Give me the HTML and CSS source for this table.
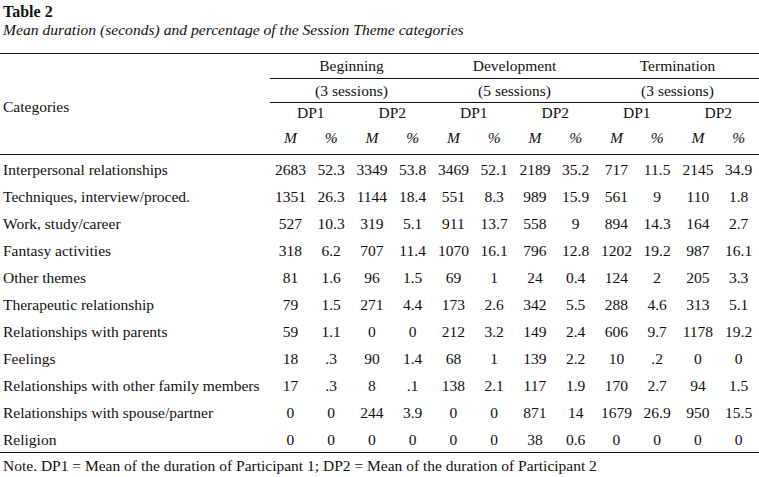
FILE: index.html
```html
<!DOCTYPE html>
<html lang="en">
<head>
<meta charset="utf-8">
<title>Table 2</title>
<link rel="stylesheet" href="styles.css">
</head>
<body>
<div class="page">
  <div class="caption">
    <div class="title">Table 2</div>
    <div class="subtitle">Mean duration (seconds) and percentage of the Session Theme categories</div>
  </div>

  <div class="thead">
    <div class="cat-head">Categories</div>
    <div class="grp g1 line">Beginning</div>
    <div class="grp g2 line">Development</div>
    <div class="grp g3 line">Termination</div>
    <div class="sess g1 line">(3 sessions)</div>
    <div class="sess g2 line">(5 sessions)</div>
    <div class="sess g3 line">(3 sessions)</div>
    <div class="dp">DP1</div>
    <div class="dp">DP2</div>
    <div class="dp">DP1</div>
    <div class="dp">DP2</div>
    <div class="dp">DP1</div>
    <div class="dp">DP2</div>
    <div class="stat">M</div><div class="stat">%</div>
    <div class="stat">M</div><div class="stat">%</div>
    <div class="stat">M</div><div class="stat">%</div>
    <div class="stat">M</div><div class="stat">%</div>
    <div class="stat">M</div><div class="stat">%</div>
    <div class="stat">M</div><div class="stat">%</div>
  </div>

  <div class="tbody">
    <div class="cat">Interpersonal relationships</div>
    <div>2683</div><div>52.3</div><div>3349</div><div>53.8</div><div>3469</div><div>52.1</div><div>2189</div><div>35.2</div><div>717</div><div>11.5</div><div>2145</div><div>34.9</div>

    <div class="cat">Techniques, interview/proced.</div>
    <div>1351</div><div>26.3</div><div>1144</div><div>18.4</div><div>551</div><div>8.3</div><div>989</div><div>15.9</div><div>561</div><div>9</div><div>110</div><div>1.8</div>

    <div class="cat">Work, study/career</div>
    <div>527</div><div>10.3</div><div>319</div><div>5.1</div><div>911</div><div>13.7</div><div>558</div><div>9</div><div>894</div><div>14.3</div><div>164</div><div>2.7</div>

    <div class="cat">Fantasy activities</div>
    <div>318</div><div>6.2</div><div>707</div><div>11.4</div><div>1070</div><div>16.1</div><div>796</div><div>12.8</div><div>1202</div><div>19.2</div><div>987</div><div>16.1</div>

    <div class="cat">Other themes</div>
    <div>81</div><div>1.6</div><div>96</div><div>1.5</div><div>69</div><div>1</div><div>24</div><div>0.4</div><div>124</div><div>2</div><div>205</div><div>3.3</div>

    <div class="cat">Therapeutic relationship</div>
    <div>79</div><div>1.5</div><div>271</div><div>4.4</div><div>173</div><div>2.6</div><div>342</div><div>5.5</div><div>288</div><div>4.6</div><div>313</div><div>5.1</div>

    <div class="cat">Relationships with parents</div>
    <div>59</div><div>1.1</div><div>0</div><div>0</div><div>212</div><div>3.2</div><div>149</div><div>2.4</div><div>606</div><div>9.7</div><div>1178</div><div>19.2</div>

    <div class="cat">Feelings</div>
    <div>18</div><div>.3</div><div>90</div><div>1.4</div><div>68</div><div>1</div><div>139</div><div>2.2</div><div>10</div><div>.2</div><div>0</div><div>0</div>

    <div class="cat">Relationships with other family members</div>
    <div>17</div><div>.3</div><div>8</div><div>.1</div><div>138</div><div>2.1</div><div>117</div><div>1.9</div><div>170</div><div>2.7</div><div>94</div><div>1.5</div>

    <div class="cat">Relationships with spouse/partner</div>
    <div>0</div><div>0</div><div>244</div><div>3.9</div><div>0</div><div>0</div><div>871</div><div>14</div><div>1679</div><div>26.9</div><div>950</div><div>15.5</div>

    <div class="cat">Religion</div>
    <div>0</div><div>0</div><div>0</div><div>0</div><div>0</div><div>0</div><div>38</div><div>0.6</div><div>0</div><div>0</div><div>0</div><div>0</div>
  </div>

  <div class="note">Note. DP1 = Mean of the duration of Participant 1; DP2 = Mean of the duration of Participant 2</div>
</div>
</body>
</html>
```

FILE: styles.css
```css
html, body {
  margin: 0;
  padding: 0;
  background: #fff;
}

body {
  font-family: "Liberation Serif", "Times New Roman", serif;
  color: #111;
  font-size: 15.5px;
}

.page {
  width: 759px;
}

.caption {
  padding: 3px 0 0 3px;
  margin-bottom: 14px;
}

.title {
  font-weight: bold;
  font-size: 16px;
  line-height: 18px;
}

.subtitle {
  font-style: italic;
  font-size: 15.6px;
  line-height: 18px;
}

.thead,
.tbody {
  display: grid;
  grid-template-columns: 270px repeat(12, 1fr);
}

.thead {
  border-top: 1px solid #111;
  border-bottom: 1px solid #111;
  grid-template-rows: 25px 24px 24px 27px;
  text-align: center;
}

.cat-head {
  grid-column: 1;
  grid-row: 1 / span 4;
  align-self: center;
  text-align: left;
  padding: 5px 0 0 3px;
}

.grp {
  grid-row: 1;
  line-height: 24px;
}

.sess {
  grid-row: 2;
  line-height: 23px;
}

.g1 { grid-column: 2 / span 4; }
.g2 { grid-column: 6 / span 4; }
.g3 { grid-column: 10 / span 4; }

.line {
  border-bottom: 1px solid #111;
}

.dp {
  grid-row: 3;
  grid-column: span 2;
  line-height: 20px;
}

.stat {
  grid-row: 4;
  font-style: italic;
  line-height: 20px;
  padding-top: 1px;
}

.tbody {
  grid-auto-rows: 27px;
  border-bottom: 1px solid #111;
  text-align: center;
  line-height: 27px;
}

.tbody > div {
  padding-top: 1px;
}

.tbody .cat {
  text-align: left;
  padding-left: 3px;
  white-space: nowrap;
}

.note {
  line-height: 24px;
  padding: 1px 0 0 3px;
}
```
